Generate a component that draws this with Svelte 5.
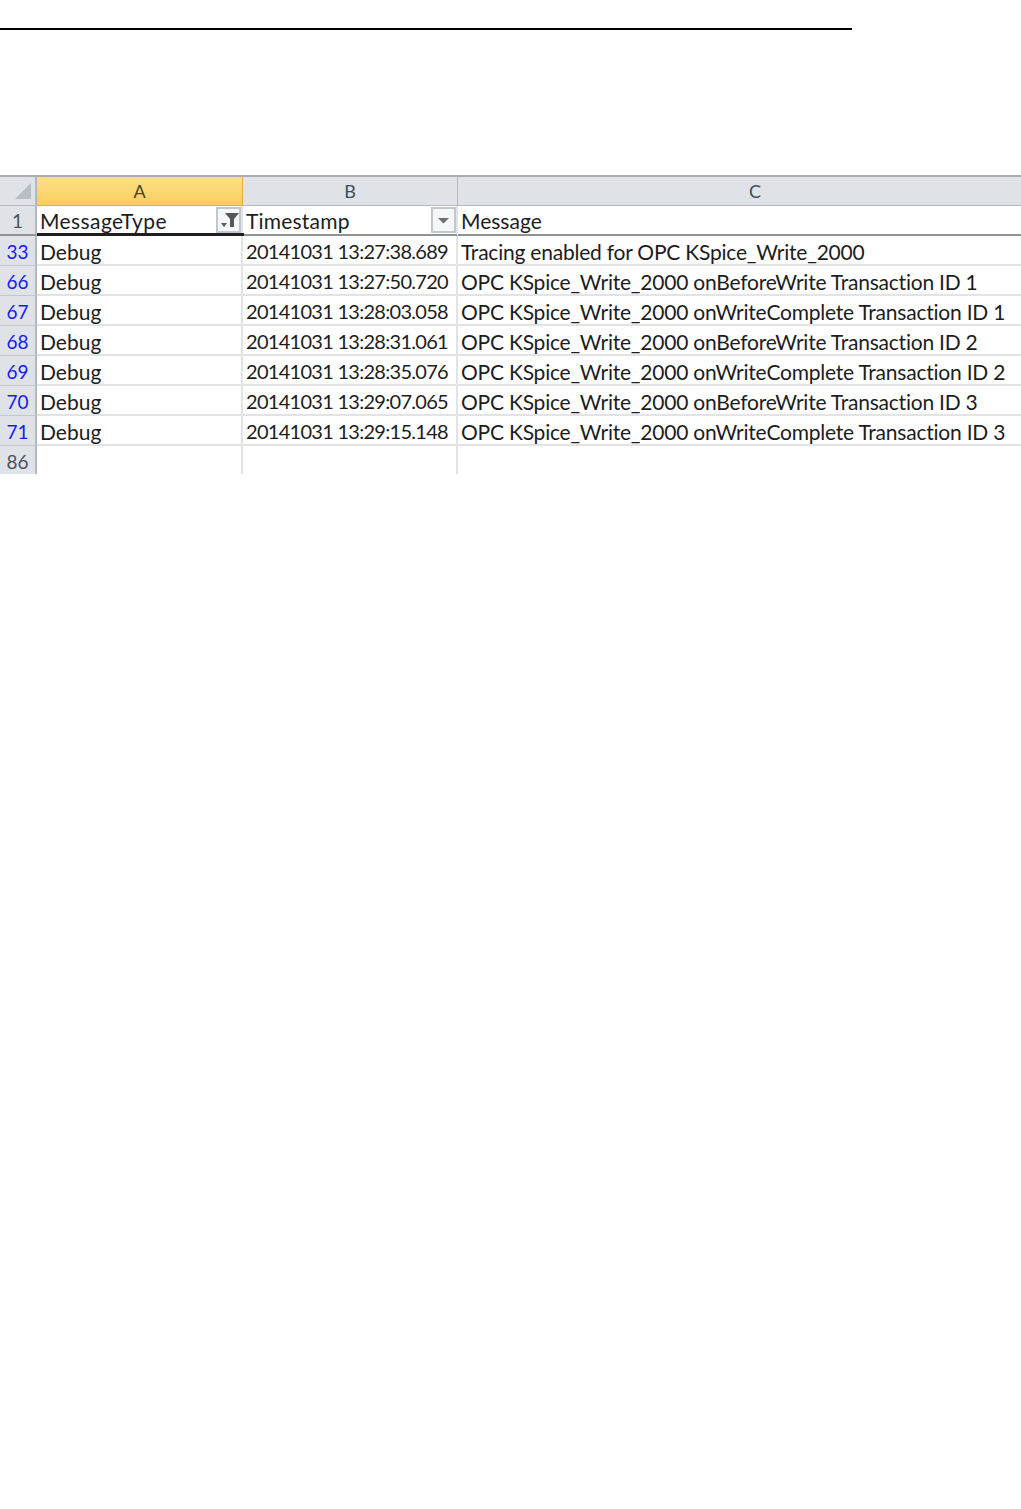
<script>
  const rows = [
    { n: 33, type: "Debug", time: "20141031 13:27:38.689", msg: "Tracing enabled for OPC KSpice_Write_2000" },
    { n: 66, type: "Debug", time: "20141031 13:27:50.720", msg: "OPC KSpice_Write_2000 onBeforeWrite Transaction ID 1" },
    { n: 67, type: "Debug", time: "20141031 13:28:03.058", msg: "OPC KSpice_Write_2000 onWriteComplete Transaction ID 1" },
    { n: 68, type: "Debug", time: "20141031 13:28:31.061", msg: "OPC KSpice_Write_2000 onBeforeWrite Transaction ID 2" },
    { n: 69, type: "Debug", time: "20141031 13:28:35.076", msg: "OPC KSpice_Write_2000 onWriteComplete Transaction ID 2" },
    { n: 70, type: "Debug", time: "20141031 13:29:07.065", msg: "OPC KSpice_Write_2000 onBeforeWrite Transaction ID 3" },
    { n: 71, type: "Debug", time: "20141031 13:29:15.148", msg: "OPC KSpice_Write_2000 onWriteComplete Transaction ID 3" }
  ];
</script>

<div class="page">
  <div class="rule"></div>

  <div class="sheet">
    <div class="head corner">
      <svg width="18" height="18" viewBox="0 0 18 18"><polygon points="17,1 17,17 1,17" fill="#b9bec4" /></svg>
    </div>
    <div class="head col active">A</div>
    <div class="head col">B</div>
    <div class="head col">C</div>

    <div class="rownum first">1</div>
    <div class="cell title selected">
      <span class="wide">MessageType</span>
      <span class="filter">
        <svg width="21" height="22" viewBox="2 2 21 22">
          <polygon points="9,6 23,6 18,12 18,20 14,20 14,12" fill="#55595e" />
          <polygon points="5,16 11,16 8,20" fill="#55595e" />
        </svg>
      </span>
      <span class="underline"></span>
    </div>
    <div class="cell title">
      <span class="stamp">Timestamp</span>
      <span class="filter">
        <svg width="21" height="22" viewBox="2 2 21 22"><polygon points="7,11 18,11 12.5,16.5" fill="#6b6f74" /></svg>
      </span>
    </div>
    <div class="cell title">Message</div>

    {#each rows as row}
      <div class="rownum link">{row.n}</div>
      <div class="cell">{row.type}</div>
      <div class="cell time">{row.time}</div>
      <div class="cell msg">{row.msg}</div>
    {/each}

    <div class="rownum last">86</div>
    <div class="cell empty"></div>
    <div class="cell empty"></div>
    <div class="cell empty"></div>
  </div>
</div>

<style>
  :global(body) {
    background: #ffffff;
  }

  .page {
    height: 1509px;
    padding-top: 28px;
    box-sizing: border-box;
    overflow: hidden;
    font-family: Lato, "Open Sans", sans-serif;
    font-size: 21px;
    color: #1d1d1d;
  }

  .rule {
    width: 852px;
    height: 2px;
    background: #000000;
  }

  .sheet {
    margin-top: 145px;
    display: grid;
    grid-template-columns: 37px 206px 215px 595px;
    grid-template-rows: 29px repeat(8, 30px) 28px;
    height: 299px;
    border-top: 2px solid #a9acb0;
    box-sizing: border-box;
    overflow: hidden;
  }

  .head {
    background: #dfe3e8;
    border-right: 1px solid #b5b9be;
    border-bottom: 1px solid #b5b9be;
    display: flex;
    align-items: center;
    justify-content: center;
    font-size: 18px;
    color: #444b55;
  }

  .corner {
    justify-content: flex-end;
    padding-right: 3px;
    border-right-width: 2px;
  }

  .active {
    background: linear-gradient(#fde08a, #f9cd5a);
    border-right: 1px solid #dcb040;
    border-bottom: 1px solid #dcb040;
    color: #4c4020;
  }

  .rownum {
    background: #dfe3e8;
    border-right: 2px solid #b5b9be;
    border-bottom: 1px solid #c3c6ca;
    padding-top: 2px;
    box-sizing: border-box;
    display: flex;
    align-items: center;
    justify-content: center;
    font-size: 19px;
    color: #4d5159;
  }

  .rownum.first {
    padding-top: 0;
    border-bottom: 2px solid #8f9296;
  }

  .rownum.link {
    color: #1a1aee;
  }

  .rownum.last {
    border-bottom: none;
  }

  .cell {
    position: relative;
    display: flex;
    align-items: center;
    padding: 2px 0 0 3px;
    box-sizing: border-box;
    border-right: 2px solid #e2e3e5;
    border-bottom: 2px solid #e2e3e5;
    white-space: nowrap;
  }

  .cell.time {
    font-size: 20px;
    letter-spacing: -0.72px;
  }

  .cell.msg {
    letter-spacing: -0.22px;
  }

  .wide {
    letter-spacing: 0.4px;
  }

  .stamp {
    letter-spacing: 0.2px;
  }

  .cell.title {
    padding-top: 0;
    border-bottom: 2px solid #8f9296;
  }

  .underline {
    position: absolute;
    left: 0;
    right: -3px;
    bottom: -2px;
    height: 3px;
    background: #1f1f1f;
    z-index: 1;
  }

  .cell.empty {
    border-bottom: none;
  }

  .filter {
    position: absolute;
    right: 0;
    top: 1px;
    width: 25px;
    height: 26px;
    border: 2px solid #c3c7cc;
    box-sizing: border-box;
    background: #f6f7f8;
    display: flex;
    align-items: center;
    justify-content: center;
  }
</style>
